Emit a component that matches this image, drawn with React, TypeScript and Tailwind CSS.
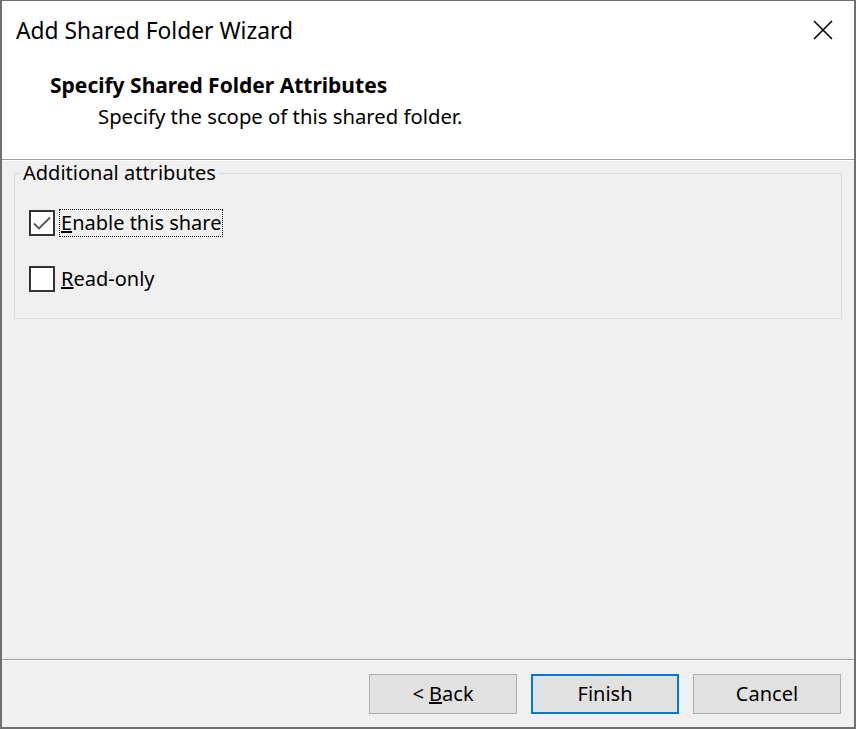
import { useState } from 'react'

export default function App() {
  const [enabled, setEnabled] = useState(true)
  const [readOnly, setReadOnly] = useState(false)

  return (
    <div className="w-[856px] h-[729px] bg-[#6f6f6f] pt-px px-[2px] pb-[2px] font-['Noto_Sans',sans-serif] text-[21px] text-black">
      <div className="h-full flex flex-col bg-white">
        {/* title bar */}
        <div className="h-[58px] flex items-center justify-between pl-[14px] pr-[21px]">
          <span className="leading-none text-[22.8px] pt-[2px]">Add Shared Folder Wizard</span>
          <svg width="20" height="20" viewBox="0 0 20 20" className="text-black">
            <path d="M1 1 L19 19 M19 1 L1 19" stroke="currentColor" strokeWidth="1.6" />
          </svg>
        </div>

        {/* header */}
        <div className="h-[100px] pl-[48px] pt-[12px]">
          <p className="font-bold text-[21px] leading-[28px]">Specify Shared Folder Attributes</p>
          <p className="pl-[48px] pt-[3px] text-[20.3px] leading-[28px]">Specify the scope of this shared folder.</p>
        </div>
        <div className="h-px bg-[#a0a0a0]" />
        <div className="h-px bg-white" />

        {/* body */}
        <div className="flex-1 bg-[#f0f0f0] px-[12px] pt-[2px]">
          <fieldset className="border border-[#dcdcdc] h-[156px] px-[14px] pt-[12px]">
            <legend className="-ml-[8px] px-[2px] text-[20px] leading-[20px]">Additional attributes</legend>
            <div className="flex flex-col gap-[30px] pt-[15px]">
              <label className="flex items-center gap-[5px] cursor-default" onClick={() => setEnabled(!enabled)}>
                <span className="w-[26px] h-[26px] border-2 border-[#333333] bg-white flex items-center justify-center">
                  {enabled && (
                    <svg width="18" height="14" viewBox="0 0 18 14">
                      <path d="M1 7.5 L6 12.5 L17 1.5" fill="none" stroke="#555555" strokeWidth="1.8" />
                    </svg>
                  )}
                </span>
                <span className="outline outline-1 outline-dotted outline-black px-px h-[26px] leading-[26px] text-[20px]">
                  <u>E</u>nable this share
                </span>
              </label>
              <label className="flex items-center gap-[5px] cursor-default" onClick={() => setReadOnly(!readOnly)}>
                <span className="w-[26px] h-[26px] border-2 border-[#333333] bg-white flex items-center justify-center">
                  {readOnly && (
                    <svg width="18" height="14" viewBox="0 0 18 14">
                      <path d="M1 7.5 L6 12.5 L17 1.5" fill="none" stroke="#555555" strokeWidth="1.8" />
                    </svg>
                  )}
                </span>
                <span className="px-px h-[26px] leading-[26px] text-[20px]">
                  <u>R</u>ead-only
                </span>
              </label>
            </div>
          </fieldset>
        </div>

        {/* footer */}
        <div className="h-px bg-[#a0a0a0]" />
        <div className="h-px bg-white" />
        <div className="h-[66px] bg-[#f0f0f0] flex justify-end gap-[14px] pr-[13px] pt-[13px]">
          <button className="w-[148px] h-[40px] bg-[#e1e1e1] border border-[#adadad] text-[20px]">
            &lt; <u>B</u>ack
          </button>
          <button className="w-[148px] h-[40px] bg-[#e1e1e1] border-2 border-[#0078d7] text-[20px]">
            Finish
          </button>
          <button className="w-[148px] h-[40px] bg-[#e1e1e1] border border-[#adadad] text-[20px]">
            Cancel
          </button>
        </div>
      </div>
    </div>
  )
}
